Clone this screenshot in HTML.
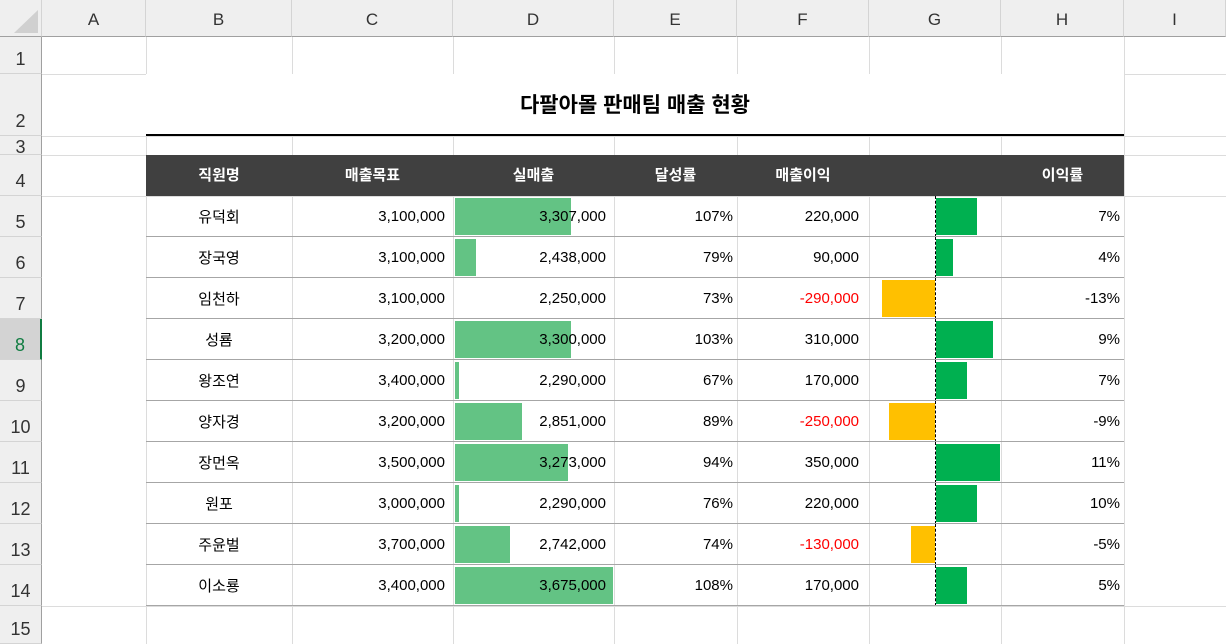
<!DOCTYPE html><html><head><meta charset="utf-8"><style>
*{margin:0;padding:0;box-sizing:border-box}
body{width:1226px;height:644px;overflow:hidden;background:#fff;position:relative;font-family:"Liberation Sans","Noto Sans CJK KR",sans-serif;font-size:15px;color:#000}
.a{position:absolute}
.ch{top:0;height:37px;background:#efefef;border-right:1px solid #d4d4d4;border-bottom:1px solid #a0a0a0;text-align:center;line-height:40px;font-size:17px;color:#333}
.rh{left:0;width:42px;background:#efefef;border-right:1px solid #a0a0a0;border-bottom:1px solid #d4d4d4;text-align:center;font-size:18px;color:#333;display:flex;align-items:flex-end;justify-content:center;padding-bottom:3px}
.vl{top:37px;bottom:0;width:1px;background:#dcdcdc}
.hl{left:42px;right:0;height:1px;background:#dcdcdc}
.c{display:flex;align-items:center;height:41px}
.r{justify-content:flex-end;padding-right:4px}
.m{justify-content:center}
.red{color:#f00}
</style></head><body>
<!-- column headers -->
<div class="a ch" style="left:0;width:42px"><svg width="42" height="37"><polygon points="38,10 38,33 14,33" fill="#d0d0d0"/></svg></div>
<div class="a ch" style="left:42px;width:104px">A</div>
<div class="a ch" style="left:146px;width:146px">B</div>
<div class="a ch" style="left:292px;width:161px">C</div>
<div class="a ch" style="left:453px;width:161px">D</div>
<div class="a ch" style="left:614px;width:123px">E</div>
<div class="a ch" style="left:737px;width:132px">F</div>
<div class="a ch" style="left:869px;width:132px">G</div>
<div class="a ch" style="left:1001px;width:123px">H</div>
<div class="a ch" style="left:1124px;width:102px">I</div>
<!-- grid -->
<div class="a vl" style="left:146px"></div><div class="a vl" style="left:292px"></div><div class="a vl" style="left:453px"></div><div class="a vl" style="left:614px"></div><div class="a vl" style="left:737px"></div><div class="a vl" style="left:869px"></div><div class="a vl" style="left:1001px"></div><div class="a vl" style="left:1124px"></div>
<div class="a hl" style="top:74px"></div><div class="a hl" style="top:136px"></div><div class="a hl" style="top:155px"></div><div class="a hl" style="top:196px"></div>
<div class="a hl" style="top:606px"></div>
<!-- row headers -->
<div class="a rh" style="top:37px;height:37px">1</div>
<div class="a rh" style="top:74px;height:62px">2</div>
<div class="a rh" style="top:136px;height:19px;padding-bottom:0;align-items:flex-end;overflow:hidden;line-height:14px">3</div>
<div class="a rh" style="top:155px;height:41px">4</div>
<div class="a rh" style="top:196px;height:41px">5</div>
<div class="a rh" style="top:237px;height:41px">6</div>
<div class="a rh" style="top:278px;height:41px">7</div>
<div class="a rh" style="top:319px;height:41px;color:#107c41;background:#d3d3d3;border-right:2px solid #107c41">8</div>
<div class="a rh" style="top:360px;height:41px">9</div>
<div class="a rh" style="top:401px;height:41px">10</div>
<div class="a rh" style="top:442px;height:41px">11</div>
<div class="a rh" style="top:483px;height:41px">12</div>
<div class="a rh" style="top:524px;height:41px">13</div>
<div class="a rh" style="top:565px;height:41px">14</div>
<div class="a rh" style="top:606px;height:38px">15</div>
<!-- title -->
<div class="a" style="left:146px;width:978px;top:74px;height:62px;background:#fff;border-bottom:2px solid #000;text-align:center;font-weight:bold;font-size:21px;line-height:64px">다팔아몰 판매팀 매출 현황</div>
<!-- header -->
<div class="a" style="left:146px;width:978px;top:155px;height:41px;background:#404040;color:#fff;font-weight:bold;font-size:15px">
<span class="a" style="left:0;width:146px;text-align:center;line-height:41px">직원명</span>
<span class="a" style="left:146px;width:161px;text-align:center;line-height:41px">매출목표</span>
<span class="a" style="left:307px;width:161px;text-align:center;line-height:41px">실매출</span>
<span class="a" style="left:468px;width:123px;text-align:center;line-height:41px">달성률</span>
<span class="a" style="left:591px;width:132px;text-align:center;line-height:41px">매출이익</span>
<span class="a" style="left:855px;width:123px;text-align:center;line-height:41px">이익률</span>
</div>
<div id="rows"></div>
<script>
var d=[["유덕회","3,100,000","3,307,000","107%","220,000","7%",571,977],
["장국영","3,100,000","2,438,000","79%","90,000","4%",476,953],
["임천하","3,100,000","2,250,000","73%","-290,000","-13%",0,882],
["성룜","3,200,000","3,300,000","103%","310,000","9%",571,993],
["왕조연","3,400,000","2,290,000","67%","170,000","7%",459,967],
["양자경","3,200,000","2,851,000","89%","-250,000","-9%",522,889],
["장먼옥","3,500,000","3,273,000","94%","350,000","11%",568,1000],
["원포","3,000,000","2,290,000","76%","220,000","10%",459,977],
["주윤벌","3,700,000","2,742,000","74%","-130,000","-5%",510,911],
["이소룡","3,400,000","3,675,000","108%","170,000","5%",613,967]];
var h="";
d.forEach(function(r,i){var t=196+41*i;
if(r[6])h+='<div class="a" style="left:455px;top:'+(t+2)+'px;width:'+(r[6]-455)+'px;height:37px;background:#63c384"></div>';
if(r[7]>935)h+='<div class="a" style="left:936px;top:'+(t+2)+'px;width:'+(r[7]-936)+'px;height:37px;background:#00b050"></div>';
else h+='<div class="a" style="left:'+r[7]+'px;top:'+(t+2)+'px;width:'+(935-r[7])+'px;height:37px;background:#ffc000"></div>';
h+='<div class="a" style="left:935px;top:'+t+'px;height:41px;border-left:1px dashed #000"></div>';
h+='<div class="a c m" style="left:146px;width:146px;top:'+t+'px">'+r[0]+'</div>';
h+='<div class="a c r" style="left:292px;width:161px;top:'+t+'px;padding-right:8px">'+r[1]+'</div>';
h+='<div class="a c r" style="left:453px;width:161px;top:'+t+'px;padding-right:8px">'+r[2]+'</div>';
h+='<div class="a c r" style="left:614px;width:123px;top:'+t+'px">'+r[3]+'</div>';
h+='<div class="a c r'+(r[4][0]=="-"?" red":"")+'" style="left:737px;width:132px;top:'+t+'px;padding-right:10px">'+r[4]+'</div>';
h+='<div class="a c r" style="left:1001px;width:123px;top:'+t+'px">'+r[5]+'</div>';
h+='<div class="a" style="left:146px;width:978px;top:'+(t+40)+'px;height:1px;background:#a6a6a6"></div>';
});
document.getElementById("rows").innerHTML=h;
</script>
</body></html>
